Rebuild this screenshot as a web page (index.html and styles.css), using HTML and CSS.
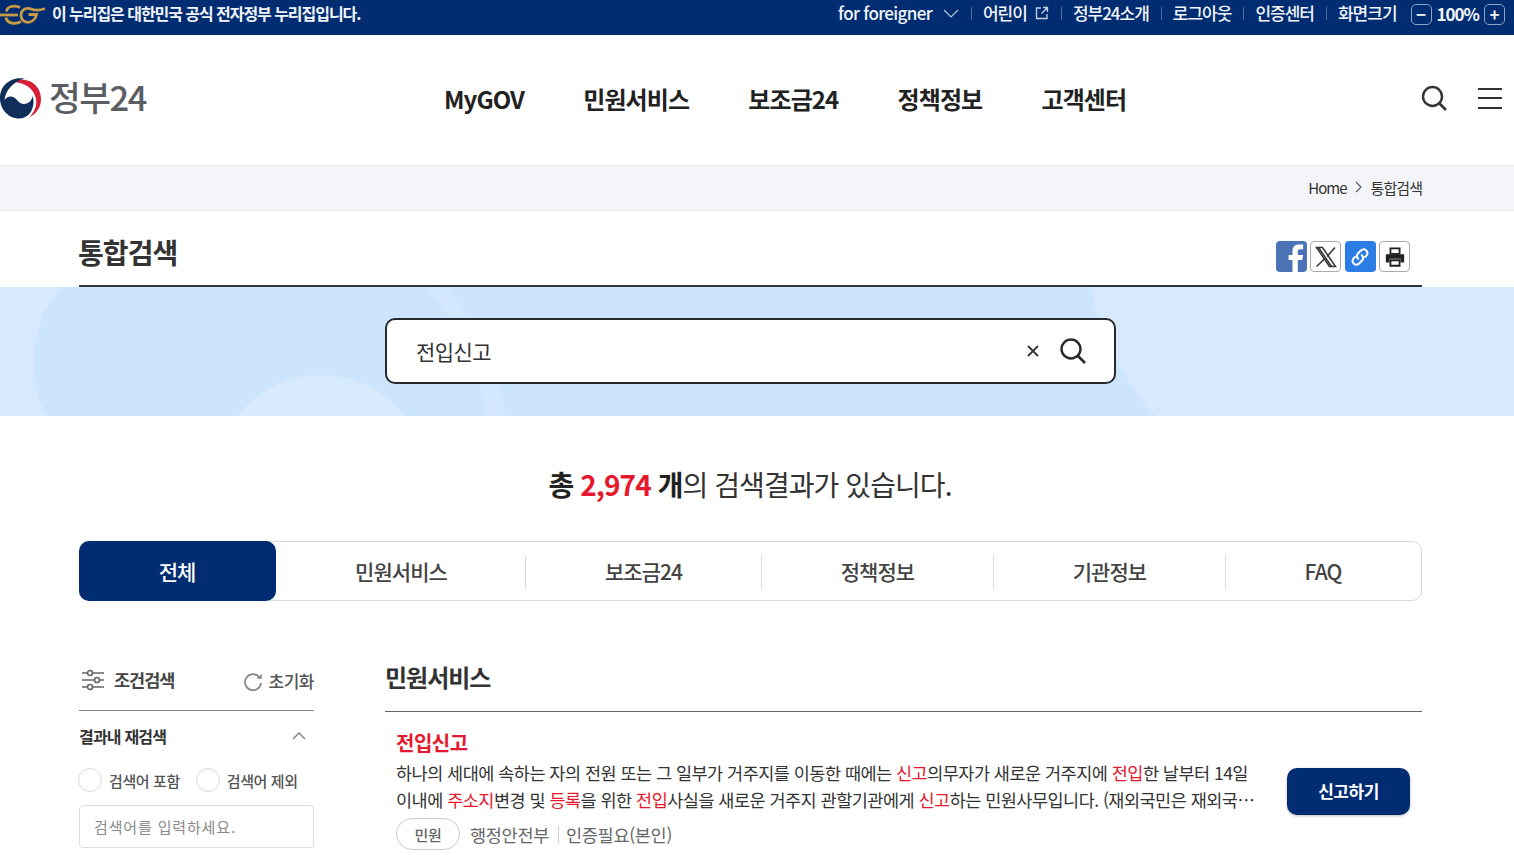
FILE: index.html
```html
<!DOCTYPE html>
<html lang="ko">
<head>
<meta charset="utf-8">
<title>정부24 통합검색</title>
<link rel="stylesheet" href="styles.css">
</head>
<body>
<div class="topbar">
  <div class="gov-note">
    <svg class="eg" viewBox="0 0 46 22" width="46" height="22"><g fill="none" stroke="#c99a45" stroke-width="2.800"><path d="M0 11h18"/><path d="M20 3.500C14 .5 7 2.500 6.500 7.500M6 13.500c.5 5 8 8 15 4"/><path d="M45 4.500c-5 2-10 2-14 .5-5-2-10 1-10 6s4 8.500 9 7c3.500-1 5.500-3.500 6.500-7.500h-8"/></g></svg>
    <span>이 누리집은 대한민국 공식 전자정부 누리집입니다.</span>
  </div>
  <div class="util">
    <span class="u-item lang">for foreigner<svg class="chev" viewBox="0 0 16 10" width="16" height="10"><path d="M1 1l7 7 7-7" fill="none" stroke="#b8c6dd" stroke-width="1.200"/></svg></span>
    <span class="u-item sep kids">어린이<svg viewBox="0 0 14 14" width="14" height="14"><path d="M6 2H1.500v10.500H12V8M8 1.500h4.500V6M12.500 1.500L6.500 7.500" fill="none" stroke="#c6d2e4" stroke-width="1.300"/></svg></span>
    <span class="u-item sep">정부24소개</span>
    <span class="u-item sep">로그아웃</span>
    <span class="u-item sep">인증센터</span>
    <span class="u-item sep">화면크기</span>
    <span class="zoom-ctl"><span class="zbtn">−</span><span class="zval">100%</span><span class="zbtn">+</span></span>
  </div>
</div>

<header class="header">
  <div class="logo">
    <svg class="mark" viewBox="0 0 42 44" width="42" height="44">
      <path d="M12 5C20-1 41 3 41 22c0 9-5 15-12 18.500 6-6 8-12.500 7-18.500C34 10 22 5 12 5z" fill="#d81f3a"/>
      <path d="M24 1.500C10-.5 0 9 0 21c0 12 9 20.500 19 20.500 9 0 15-8 14.500-18-.1-1.800-.5-3-1-4.500-.5 5-4.500 8-8.500 8-5 0-6.500-4.500-10-6.500-3.500-2-8-.5-9.500 3C5 14 13 5 24 1.500z" fill="#0f2e59"/>
    </svg>
    <span class="logo-text">정부24</span>
  </div>
  <nav class="gnb">
    <a>MyGOV</a><a>민원서비스</a><a>보조금24</a><a>정책정보</a><a>고객센터</a>
  </nav>
  <div class="head-icons">
    <svg viewBox="0 0 28 28" width="28" height="28"><circle cx="12.500" cy="12.500" r="9.500" fill="none" stroke="#333" stroke-width="2.400"/><path d="M19.500 19.500l6.500 6.500" stroke="#333" stroke-width="2.600"/></svg>
    <span class="burger"><i></i><i></i><i></i></span>
  </div>
</header>

<div class="crumb"><span>Home</span><svg viewBox="0 0 8 12" width="8" height="12"><path d="M1 1l5 5-5 5" fill="none" stroke="#555" stroke-width="1.100"/></svg><span>통합검색</span></div>

<div class="title-row">
  <h1>통합검색</h1>
  <div class="share">
    <span class="sbtn fb"><svg viewBox="0 0 32 32" width="32" height="32"><path d="M17 32V19h-4v-5h4v-4c0-4.500 2.500-7 6.500-7H28v5h-3c-2 0-2.500 1-2.500 2.500V14H28l-1 5h-4.500v13z" fill="#fff"/></svg></span>
    <span class="sbtn line"><svg viewBox="0 0 24 24" width="24" height="24"><path d="M2.500 2.500h6l13 19h-6z" fill="none" stroke="#333" stroke-width="1.500"/><path d="M4.500 2.500l13 19M21 2.500l-8 9M11 13.500l-8.500 8" fill="none" stroke="#333" stroke-width="1.500"/></svg></span>
    <span class="sbtn link"><svg viewBox="0 0 24 24" width="22" height="22"><g fill="none" stroke="#fff" stroke-width="2.200" stroke-linecap="round"><path d="M10 14c-2-2-2-4 0-6l3-3c2-2 4.500-2 6 0s1.500 4 0 5.500l-1.500 1.500"/><path d="M14 10c2 2 2 4 0 6l-3 3c-2 2-4.500 2-6 0s-1.500-4 0-5.500l1.500-1.500"/></g></svg></span>
    <span class="sbtn line"><svg viewBox="0 0 24 24" width="22" height="22"><path d="M7 2.500h10v6H7z" fill="none" stroke="#222" stroke-width="2"/><path d="M2 9h20v9h-4v-4H6v4H2z" fill="#222"/><path d="M7 15.500h10v6H7z" fill="none" stroke="#222" stroke-width="2"/></svg></span>
  </div>
</div>

<section class="search-band">
  <svg class="band-bg" viewBox="0 0 1514 129" width="1514" height="129" preserveAspectRatio="none">
    <path d="M62 0C42 22 34 48 34 75c0 20 4 38 13 54h1108C1125 95 1100 50 1090 0z" fill="#cde4fd"/>
    <path d="M427 0c30 40 55 85 58 129h20C500 85 480 35 445 0z" fill="#d3e7fe"/>
    <path d="M238 129c22-28 50-41 82-41s62 13 85 41z" fill="#d7eafe"/>
  </svg>
  <div class="search-box">
    <span class="query">전입신고</span>
    <svg class="x" viewBox="0 0 12 12" width="12" height="12"><path d="M1 1l10 10M11 1L1 11" stroke="#333" stroke-width="1.800"/></svg>
    <svg viewBox="0 0 28 28" width="28" height="28"><circle cx="12" cy="12" r="9.500" fill="none" stroke="#2a2a2a" stroke-width="2.400"/><path d="M19 19l7 7" stroke="#2a2a2a" stroke-width="2.600"/></svg>
  </div>
</section>

<p class="total"><b>총 <em>2,974</em> 개</b>의 검색결과가 있습니다.</p>

<div class="tabs">
  <a class="tab on">전체</a><a class="tab">민원서비스</a><a class="tab">보조금24</a><a class="tab">정책정보</a><a class="tab">기관정보</a><a class="tab">FAQ</a>
</div>

<div class="content">
  <aside class="side">
    <div class="side-head">
      <span class="cond"><svg viewBox="0 0 24 24" width="24" height="24"><g fill="#fff" stroke="#666" stroke-width="1.700"><path d="M1 5h22M1 12h22M1 19h22"/><circle cx="9" cy="5" r="2.500"/><circle cx="16" cy="12" r="2.500"/><circle cx="9" cy="19" r="2.500"/></g></svg>조건검색</span>
      <span class="reset"><svg viewBox="0 0 20 20" width="20" height="20"><path d="M16.500 6.500A8 8 0 1 0 18 12" fill="none" stroke="#888" stroke-width="1.800"/><path d="M13.500 7.500l5 .5 .5-5z" fill="#888"/></svg>초기화</span>
    </div>
    <div class="side-title"><span>결과내 재검색</span><svg viewBox="0 0 14 8" width="14" height="8"><path d="M1 7l6-6 6 6" fill="none" stroke="#888" stroke-width="1.500"/></svg></div>
    <div class="radios">
      <label class="radio"><i></i>검색어 포함</label>
      <label class="radio"><i></i>검색어 제외</label>
    </div>
    <div class="side-input">검색어를 입력하세요.</div>
  </aside>
  <main class="main">
    <h2>민원서비스</h2>
    <article class="item">
      <div class="item-body">
        <h3>전입신고</h3>
        <p class="desc">하나의 세대에 속하는 자의 전원 또는 그 일부가 거주지를 이동한 때에는 <em>신고</em>의무자가 새로운 거주지에 <em>전입</em>한 날부터 14일</p>
        <p class="desc">이내에 <em>주소지</em>변경 및 <em>등록</em>을 위한 <em>전입</em>사실을 새로운 거주지 관할기관에게 <em>신고</em>하는 민원사무입니다. (재외국민은 재외국⋯</p>
        <div class="meta"><span class="pill">민원</span><span>행정안전부</span><span class="bar"></span><span>인증필요(본인)</span></div>
      </div>
      <a class="cta">신고하기</a>
    </article>
  </main>
</div>
</body>
</html>
```

FILE: styles.css
```css
* { box-sizing: border-box; }
html, body { margin: 0; padding: 0; height: 855px; overflow: hidden; background: #fff; }
body { font-family: "Noto Sans CJK KR", "Noto Sans", sans-serif; color: #222; }
h1, h2, h3, p { margin: 0; }
em { font-style: normal; }

.topbar { height: 35px; background: #002c71; color: #f2f5fa; display: flex; justify-content: space-between; align-items: center; padding: 0 9px 9px 0; font-size: 17px; font-weight: 500; letter-spacing: -1px; line-height: 22px; }
.gov-note { display: flex; align-items: center; gap: 6px; font-size: 16px; font-weight: 700; letter-spacing: -1.050px; }
.eg { display: block; margin-top: 4px; }
.util { display: flex; align-items: center; }
.u-item { display: flex; align-items: center; gap: 10px; white-space: nowrap; }
.lang { letter-spacing: -0.650px; gap: 11px; }
.kids { gap: 8px; }
.chev { margin-top: 2px; }
.sep { margin-left: 12px; padding-left: 12px; position: relative; }
.sep::before { content: ""; position: absolute; left: 0; top: 5px; height: 13px; width: 1px; background: #4f6c9b; }
.zoom-ctl { display: flex; align-items: center; gap: 5px; margin-left: 14px; }
.zbtn { width: 21px; height: 21px; border: 1px solid #8ea2c2; border-radius: 5px; display: flex; align-items: center; justify-content: center; font-size: 17px; font-weight: 700; letter-spacing: 0; margin-top: 2px; }
.zval { letter-spacing: -1px; font-weight: 700; margin-top: 1px; }

.header { height: 130px; display: flex; align-items: center; }
.logo { width: 444px; display: flex; align-items: center; gap: 7px; margin-top: -3px; }
.mark { display: block; }
.logo-text { font-size: 34.500px; font-weight: 500; color: #5a5d62; letter-spacing: -1.500px; line-height: 44px; margin-top: -5px; }
.gnb { display: flex; gap: 59.200px; font-size: 24px; font-weight: 700; color: #222; letter-spacing: -0.900px; margin-top: -4px; }
.head-icons { margin-left: auto; padding-right: 12px; display: flex; align-items: center; gap: 30px; margin-top: -4px; }
.head-icons svg { display: block; }
.burger { display: flex; flex-direction: column; gap: 7.500px; width: 24px; }
.burger i { display: block; height: 2px; background: #333; }

.crumb { height: 46px; background: #f3f5f8; border-top: 1px solid #eceef1; border-bottom: 1px solid #eceef1; display: flex; align-items: center; justify-content: flex-end; gap: 8px; padding-right: 92px; padding-bottom: 2px; font-size: 15px; letter-spacing: -0.950px; color: #333; }

.title-row { height: 76px; margin: 0 92px 0 79px; border-bottom: 2px solid #333; display: flex; justify-content: space-between; align-items: flex-start; }
h1 { font-size: 28px; font-weight: 700; color: #333; letter-spacing: -0.900px; line-height: 40px; margin-top: 21px; margin-left: -1px; }
.share { display: flex; gap: 3.330px; margin-top: 30px; margin-right: 12px; }
.sbtn { width: 31px; height: 31px; border-radius: 4px; display: flex; align-items: center; justify-content: center; overflow: hidden; }
.fb { background: #4a72b5; }
.line { background: #fff; border: 1px solid #aaa; }
.link { background: #2b7de5; }

.search-band { height: 129px; background: #d6e9fe; position: relative; overflow: hidden; display: flex; align-items: center; justify-content: center; }
.band-bg { position: absolute; left: 0; top: 0; }
.search-box { position: relative; width: 731px; height: 66px; margin: -2px 13px 0 0; background: #fff; border: 2px solid #26292e; border-radius: 10px; display: flex; align-items: center; padding: 0 27px 0 29px; }
.query { flex: 1; font-size: 21px; letter-spacing: -0.600px; color: #333; }
.x { margin-right: 20px; }

.total { margin-top: 46px; padding-right: 14px; text-align: center; font-size: 28px; letter-spacing: -0.930px; line-height: 44px; color: #333; height: 44px; }
.total b { font-weight: 700; color: #222; }
.total em { color: #e6182e; }

.tabs { margin: 35px 92px 0 79px; height: 60px; border: 1px solid #d6d9de; border-radius: 10px; display: grid; grid-template-columns: 197px 249px 236px 232px 232px 1fr; align-items: center; font-size: 21px; font-weight: 500; letter-spacing: -0.950px; color: #444; }
.tab { text-align: center; position: relative; height: 100%; display: flex; align-items: center; justify-content: center; margin-left: -1px; }
.tab.on { background: #002c71; color: #fff; border-radius: 10px; margin: -1px 1px -1px -1px; height: 60px; padding-right: 1px; }
.tab:nth-child(n+3)::before { content: ""; position: absolute; left: 0; top: 14px; height: 33px; width: 1px; background: #d4d7dc; }

.content { margin: 49px 92px 0 79px; display: grid; grid-template-columns: 235px 1037px; column-gap: 71px; }
.side-head { display: flex; justify-content: space-between; align-items: center; height: 61px; border-bottom: 1px solid #888; padding-left: 2px; }
.cond { display: flex; align-items: center; gap: 9px; font-size: 17.500px; font-weight: 700; color: #444; letter-spacing: -1px; margin-top: -1px; }
.reset { display: flex; align-items: center; gap: 6px; font-size: 17px; font-weight: 500; color: #555; letter-spacing: -0.500px; margin-top: 1px; margin-left: -4px; }
.side-title { display: flex; justify-content: space-between; align-items: center; height: 50px; font-size: 16px; font-weight: 700; color: #333; letter-spacing: -0.800px; padding-right: 8px; }
.radios { display: flex; gap: 16px; margin: 7px 0 0 -1px; }
.radio { display: flex; align-items: center; gap: 7px; font-size: 15px; font-weight: 500; color: #555; letter-spacing: -0.400px; }
.radio i { display: block; width: 24px; height: 24px; border: 1px solid #d8d8d8; border-radius: 50%; background: #fff; }
.side-input { margin-top: 13px; height: 43px; border: 1px solid #dcdcdc; border-radius: 4px; padding-left: 14px; display: flex; align-items: center; font-size: 15px; color: #8a8a8a; letter-spacing: 0.850px; }

h2 { font-size: 24px; font-weight: 700; color: #333; letter-spacing: -1px; line-height: 36px; height: 62px; border-bottom: 1px solid #666; padding-top: 9px; }
.item { display: flex; justify-content: space-between; padding: 15px 12px 0 11px; }
h3 { font-size: 20px; font-weight: 700; color: #e6182e; letter-spacing: -0.500px; line-height: 31px; margin-bottom: 1px; }
.desc { font-size: 17.500px; line-height: 27px; color: #333; letter-spacing: -0.520px; white-space: nowrap; }
.desc em { color: #e6182e; }
.item-body { min-width: 0; }
.meta { display: flex; align-items: center; margin-top: 5px; font-size: 17.500px; color: #666; letter-spacing: -0.300px; }
.pill { width: 64px; height: 32px; border: 1px solid #ccc; border-radius: 16px; display: flex; align-items: center; justify-content: center; font-size: 15px; font-weight: 500; margin-right: 10px; }
.bar { width: 1px; height: 17px; background: #ccc; margin: 0 7px 0 9px; }
.cta { width: 123px; height: 47px; margin-top: 41px; padding-bottom: 3px; background: #002c71; color: #fff; border-radius: 10px; display: flex; align-items: center; justify-content: center; font-size: 17px; font-weight: 700; letter-spacing: -0.500px; box-shadow: 0 1px 3px rgba(0,0,0,.25); }
```
